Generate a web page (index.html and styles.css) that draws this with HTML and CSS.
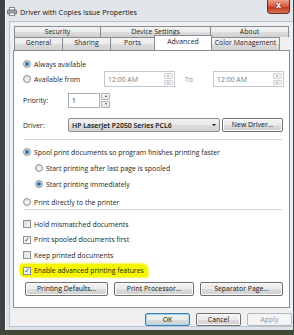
FILE: index.html
```html
<!DOCTYPE html>
<html lang="en">

<head>
    <meta charset="UTF-8">
    <title>Driver with Copies Issue Properties</title>
    <link rel="stylesheet" href="styles.css">
</head>

<body>
    <div class="window">
        <div class="titlebar">
            <svg class="printer" width="10" height="9" viewBox="0 0 10 9">
                <rect x="2.5" y="0.5" width="5" height="3" fill="#fff" stroke="#888" stroke-width="1"/>
                <rect x="0.5" y="3" width="9" height="4" rx="1" fill="#9aa3ab" stroke="#6a7178" stroke-width="1"/>
                <rect x="2.5" y="6" width="5" height="2.5" fill="#fff" stroke="#888" stroke-width="1"/>
            </svg>
            <span class="title">Driver with Copies Issue Properties</span>
            <div class="close">x</div>
        </div>

        <div class="dialog">
            <div class="tabs">
                <div class="tab-row">
                    <div class="tab w86">Security</div>
                    <div class="tab w110">Device Settings</div>
                    <div class="tab w79">About</div>
                </div>
                <div class="tab-row">
                    <div class="tab w48">General</div>
                    <div class="tab w48">Sharing</div>
                    <div class="tab w44">Ports</div>
                    <div class="tab w58 active">Advanced</div>
                    <div class="tab w68">Color Management</div>
                </div>
            </div>

            <div class="panel">
                <div class="row r-always">
                    <span class="radio checked"></span>Always available
                </div>
                <div class="row r-from">
                    <div class="from-label"><span class="radio"></span>Available from</div>
                    <div class="time">
                        <span class="time-text">12:00 AM</span>
                        <span class="spin"><i class="up"></i><i class="down"></i></span>
                    </div>
                    <span class="to">To</span>
                    <div class="time">
                        <span class="time-text">12:00 AM</span>
                        <span class="spin"><i class="up"></i><i class="down"></i></span>
                    </div>
                </div>
                <div class="row r-priority">
                    <span class="label">Priority:</span>
                    <div class="number">
                        <span class="number-text">1</span>
                        <span class="spin"><i class="up"></i><i class="down"></i></span>
                    </div>
                </div>
                <div class="row r-driver">
                    <span class="label">Driver:</span>
                    <div class="select">
                        <span>HP LaserJet P2050 Series PCL6</span>
                        <i class="caret"></i>
                    </div>
                    <div class="btn new-driver">New Driver...</div>
                </div>
                <div class="sep sep-1"></div>
                <div class="row r-spool">
                    <span class="radio checked"></span>Spool print documents so program finishes printing faster
                </div>
                <div class="row sub">
                    <span class="radio"></span>Start printing after last page is spooled
                </div>
                <div class="row sub">
                    <span class="radio checked"></span>Start printing immediately
                </div>
                <div class="row r-direct">
                    <span class="radio"></span>Print directly to the printer
                </div>
                <div class="sep"></div>
                <div class="row r-hold">
                    <span class="check"></span>Hold mismatched documents
                </div>
                <div class="row r-short">
                    <span class="check checked">&#10003;</span>Print spooled documents first
                </div>
                <div class="row r-keep">
                    <span class="check"></span>Keep printed documents
                </div>
                <div class="row r-short">
                    <span class="highlight"><span class="check checked">&#10003;</span>Enable advanced printing features</span>
                </div>
                <div class="panel-buttons">
                    <div class="btn w83">Printing Defaults...</div>
                    <div class="btn w80">Print Processor...</div>
                    <div class="btn w83">Separator Page...</div>
                </div>
            </div>

            <div class="footer">
                <div class="btn default">OK</div>
                <div class="btn">Cancel</div>
                <div class="btn disabled">Apply</div>
            </div>
        </div>
    </div>
</body>

</html>
```

FILE: styles.css
```css
* {
    margin: 0px;
    padding: 0px;
    box-sizing: border-box;
}

body {
    width: 294px;
    height: 335px;
    overflow: hidden;
    background: linear-gradient(to bottom, #3f4347 0%, #3f4347 97%, #3d4a32 100%);
    font-family: "Open Sans", "Liberation Sans", sans-serif;
    font-size: 6.9px;
    color: #1e1e1e;
}

.window {
    margin-left: 5px;
    width: 288px;
    height: 330px;
    padding: 0 0 3px 3px;
    background: linear-gradient(to bottom, #dfe4e9, #e4e9ee 40px, #dde3e9);
    border-left: 1px solid #f4f6f8;
    display: flex;
    flex-direction: column;
}

/* title bar */
.titlebar {
    height: 22px;
    display: flex;
    align-items: center;
    position: relative;
    margin-left: -2px;
    padding-top: 2px;
}

.printer {
    margin-right: 3px;
}

.title {
    font-size: 7.2px;
    color: #111;
}

.close {
    position: absolute;
    right: 3px;
    top: 0;
    width: 23px;
    height: 14px;
    border: 1px solid #6d2a1e;
    border-top: none;
    border-radius: 0 0 4px 4px;
    background: linear-gradient(to bottom, #e9a08d, #d4583e 50%, #c0361e 55%, #d87452);
    color: #fff;
    font-family: "DejaVu Sans", sans-serif;
    font-weight: bold;
    font-size: 8px;
    line-height: 12px;
    text-align: center;
    text-shadow: 0 0 1px #5a1a10, 0 0 1px #5a1a10;
}

/* dialog body */
.dialog {
    flex: 1;
    background: #f0f0f0;
    border: 1px solid #b9c3cd;
    border-right: none;
    padding: 4px 0 0 3px;
}

.tabs {
    height: 24px;
    padding-left: 1px;
    display: flex;
    flex-direction: column;
}

.tab-row {
    display: flex;
    height: 11px;
}

.tab-row + .tab-row {
    height: 13px;
}

.tab {
    height: 100%;
    border: 1px solid #898c95;
    border-bottom: none;
    border-right: none;
    background: linear-gradient(to bottom, #f2f2f2, #ebebeb 50%, #dddddd 51%, #cfcfcf);
    text-align: center;
    line-height: 10px;
    color: #1e1e1e;
}

.tab:last-child {
    border-right: 1px solid #898c95;
}

.tab.active {
    background: #fff;
    margin-top: -2px;
    height: 15px;
    position: relative;
    z-index: 1;
    border-right: 1px solid #898c95;
    line-height: 12px;
}

.tab.active + .tab {
    border-left: none;
}

.w86 { width: 86px; }
.w110 { width: 110px; }
.w79 { width: 79px; }
.w48 { width: 48px; }
.w44 { width: 44px; }
.w58 { width: 58px; }
.w68 { width: 68px; }
.w83 { width: 83px; }
.w80 { width: 80px; }

/* tab panel */
.panel {
    width: 277px;
    height: 258px;
    background: #fff;
    border: 1px solid #898c95;
    padding: 6px 0 0 9px;
}

.row {
    display: flex;
    align-items: center;
    height: 16px;
}

.r-always { height: 14px; }
.r-priority { height: 15px; margin-top: 6px; }
.r-driver { height: 14px; margin-top: 10px; }
.r-spool { margin-top: 4px; }
.sub { padding-left: 12px; }
.r-direct { height: 14px; margin-top: 3px; }
.r-hold { margin-top: 6px; }
.r-short { height: 15px; }
.r-keep { height: 16px; }

.sep {
    width: 258px;
    height: 1px;
    background: #d5d5d5;
    margin-left: 1px;
}

.sep-1 {
    margin-top: 7px;
}

.radio {
    width: 8px;
    height: 8px;
    border-radius: 50%;
    border: 1px solid #8e8f8f;
    background: radial-gradient(circle at 60% 60%, #f4f4f4, #d8d8d8);
    margin-right: 3px;
    flex-shrink: 0;
}

.radio.checked {
    background: radial-gradient(circle at 50% 50%, #1f5fa0 0, #3a87c8 1.6px, #e8eef4 2.6px, #d8dde2 4px);
}

.check {
    width: 8px;
    height: 8px;
    border: 1px solid #8e8f8f;
    background: linear-gradient(135deg, #dcdcdc, #f6f6f6);
    margin-right: 3px;
    flex-shrink: 0;
    font-size: 7px;
    line-height: 6px;
    text-align: center;
    color: #2a4f8c;
    font-family: "DejaVu Sans", sans-serif;
}

.check.checked {
    background: #f6f6f6;
}

.highlight {
    display: flex;
    align-items: center;
    background: #f6f600;
    margin-left: -3px;
    padding: 2px 4px 2px 3px;
    border-radius: 3px 6px 2px 5px;
    box-shadow: 0 0 2px 1px #f8f84a;
}

.from-label {
    width: 81px;
    display: flex;
    align-items: center;
}

.time {
    width: 71px;
    height: 16px;
    border: 1px solid #c5c8cc;
    background: #fff;
    display: flex;
    justify-content: space-between;
    align-items: center;
    padding: 1px 1px 1px 3px;
    color: #7a7a7a;
}

.to {
    width: 38px;
    padding-left: 10px;
    color: #8a8a8a;
}

.spin {
    width: 9px;
    height: 100%;
    display: flex;
    flex-direction: column;
    gap: 1px;
}

.spin i {
    flex: 1;
    border: 1px solid #d4d6d9;
    border-radius: 1px;
    background: #eef0f2;
    position: relative;
}

.spin i::after {
    content: "";
    position: absolute;
    left: 2px;
    top: 1px;
    border-left: 1.5px solid transparent;
    border-right: 1.5px solid transparent;
}

.spin .up::after {
    border-bottom: 2px solid #9aa0a6;
}

.spin .down::after {
    border-top: 2px solid #9aa0a6;
}

.label {
    width: 45px;
}

.number {
    width: 42px;
    height: 15px;
    display: flex;
    justify-content: space-between;
    align-items: center;
    padding: 0 0 0 3px;
}

.number-text {
    flex: 1;
    height: 100%;
    border: 1px solid #abadb3;
    line-height: 13px;
    padding-left: 3px;
    margin-left: -3px;
    margin-right: 1px;
}

.number .spin i {
    border-color: #a9b1ba;
    background: linear-gradient(to bottom, #f7f7f7, #e2e5e9);
}

.number .spin i::after {
    left: 2.5px;
}

.number .spin .up::after {
    border-bottom-color: #40464d;
}

.number .spin .down::after {
    border-top-color: #40464d;
}

.select {
    width: 152px;
    height: 14px;
    border: 1px solid #8a8d93;
    border-radius: 2px;
    background: linear-gradient(to bottom, #f3f3f3, #e9e9e9 50%, #dcdcdc 51%, #d2d2d2);
    display: flex;
    align-items: center;
    justify-content: space-between;
    padding: 0 3px 0 3px;
    font-weight: 600;
    color: #111;
}

.caret {
    border-left: 2px solid transparent;
    border-right: 2px solid transparent;
    border-top: 2.5px solid #111;
}

.btn {
    height: 14px;
    border: 1px solid #707070;
    border-radius: 2px;
    background: linear-gradient(to bottom, #f2f2f2, #ebebeb 50%, #dddddd 51%, #cfcfcf);
    text-align: center;
    line-height: 12px;
    color: #111;
    box-shadow: inset 0 0 0 1px #fbfbfb;
}

.new-driver {
    width: 61px;
    margin-left: 2px;
}

.panel-buttons {
    margin-top: 4px;
    margin-left: 2px;
    display: flex;
    gap: 6px;
}

.footer {
    display: flex;
    gap: 6px;
    margin-top: 5px;
    padding-left: 132px;
}

.footer .btn {
    width: 45px;
    height: 13px;
    line-height: 11px;
}

.footer .btn.default {
    border-color: #3c7fb1;
    box-shadow: inset 0 0 0 1px #9fd5f5;
}

.footer .btn.disabled {
    border-color: #b4b8bb;
    background: #f4f4f4;
    color: #9a9a9a;
    box-shadow: none;
}
```
